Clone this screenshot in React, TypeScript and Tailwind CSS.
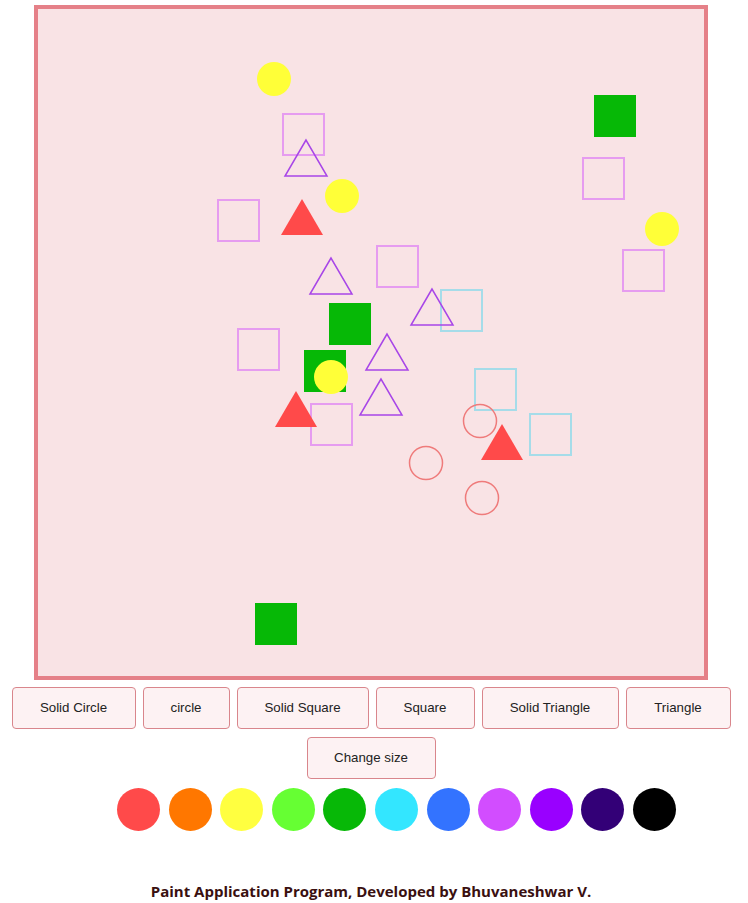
const yellowDots = [
  { cx: 274, cy: 79 },
  { cx: 342, cy: 196 },
  { cx: 662, cy: 229 },
];

const greenSquares = [
  { x: 594, y: 95 },
  { x: 329, y: 303 },
  { x: 304, y: 350 },
  { x: 255, y: 603 },
];

const pinkSquares = [
  { x: 282, y: 113 },
  { x: 217, y: 199 },
  { x: 376, y: 245 },
  { x: 582, y: 157 },
  { x: 622, y: 249 },
  { x: 237, y: 328 },
  { x: 310, y: 403 },
];

const cyanSquares = [
  { x: 440, y: 289 },
  { x: 474, y: 368 },
  { x: 529, y: 413 },
];

// apex x, apex y; triangles are 42 wide and 36 tall
const purpleTriangles = [
  { x: 306, y: 140 },
  { x: 331, y: 258 },
  { x: 432, y: 289 },
  { x: 387, y: 334 },
  { x: 381, y: 379 },
];

const redTriangles = [
  { x: 302, y: 199 },
  { x: 296, y: 391 },
  { x: 502, y: 424 },
];

const redRings = [
  { cx: 480, cy: 421 },
  { cx: 426, cy: 463 },
  { cx: 482, cy: 498 },
];

const tri = (x: number, y: number) => `${x},${y} ${x - 21},${y + 36} ${x + 21},${y + 36}`;

const tools = [
  { label: "Solid Circle", w: "w-[124px]" },
  { label: "circle", w: "w-[87px]" },
  { label: "Solid Square", w: "w-[132px]" },
  { label: "Square", w: "w-[99px]" },
  { label: "Solid Triangle", w: "w-[137px]" },
  { label: "Triangle", w: "w-[105px]" },
];

const colors = [
  "bg-[#ff4a4a]",
  "bg-[#ff7700]",
  "bg-[#ffff40]",
  "bg-[#66ff33]",
  "bg-[#07b807]",
  "bg-[#33e6ff]",
  "bg-[#3373ff]",
  "bg-[#d24dff]",
  "bg-[#9900ff]",
  "bg-[#330077]",
  "bg-[#000000]",
];

export default function App() {
  return (
    <main className="min-h-screen bg-white font-['Liberation_Sans',Arial,sans-serif]">
      <div className="w-[742px] flex flex-col items-center pt-[5px]">
        {/* drawing board */}
        <div className="w-[674px] h-[675px] border-4 border-[#e58088] bg-[#f9e3e5]">
          <svg width="666" height="667" viewBox="38 9 666 667" className="block">
            {pinkSquares.map((s, i) => (
              <rect key={`p${i}`} x={s.x + 1} y={s.y + 1} width="41" height="41" fill="none" stroke="#e69cf0" strokeWidth="2" />
            ))}
            {cyanSquares.map((s, i) => (
              <rect key={`c${i}`} x={s.x + 1} y={s.y + 1} width="41" height="41" fill="none" stroke="#a6dce9" strokeWidth="2" />
            ))}
            {greenSquares.map((s, i) => (
              <rect key={`g${i}`} x={s.x} y={s.y} width="42" height="42" fill="#06b806" />
            ))}
            {yellowDots.map((c, i) => (
              <circle key={`y${i}`} cx={c.cx} cy={c.cy} r="17" fill="#ffff38" />
            ))}
            <circle cx="331" cy="377" r="17" fill="#ffff38" />
            {purpleTriangles.map((t, i) => (
              <polygon key={`t${i}`} points={tri(t.x, t.y)} fill="none" stroke="#a846e8" strokeWidth="1.5" />
            ))}
            {redTriangles.map((t, i) => (
              <polygon key={`r${i}`} points={tri(t.x, t.y)} fill="#ff4a4a" />
            ))}
            {redRings.map((c, i) => (
              <circle key={`o${i}`} cx={c.cx} cy={c.cy} r="16.5" fill="none" stroke="#ef7b7b" strokeWidth="1.5" />
            ))}
          </svg>
        </div>

        {/* shape tools */}
        <div className="flex gap-[7px] mt-[7px]">
          {tools.map((t) => (
            <button
              key={t.label}
              className={`${t.w} h-[42px] rounded border border-[#d9868c] bg-[#fdf2f3] text-[13.3px] text-[#222]`}
            >
              {t.label}
            </button>
          ))}
        </div>
        <button className="w-[129px] h-[42px] mt-[8px] rounded border border-[#d9868c] bg-[#fdf2f3] text-[13.3px] text-[#222]">
          Change size
        </button>

        {/* palette */}
        <div className="w-full flex justify-center gap-[8.6px] pl-[51px] mt-[9px]">
          {colors.map((c) => (
            <div key={c} className={`w-[43px] h-[43px] rounded-full ${c}`} />
          ))}
        </div>

        <p className="mt-[49px] text-[15px] font-bold text-[#3a1010] font-['Open_Sans',sans-serif]">
          Paint Application Program, Developed by Bhuvaneshwar V.
        </p>
      </div>
    </main>
  );
}
